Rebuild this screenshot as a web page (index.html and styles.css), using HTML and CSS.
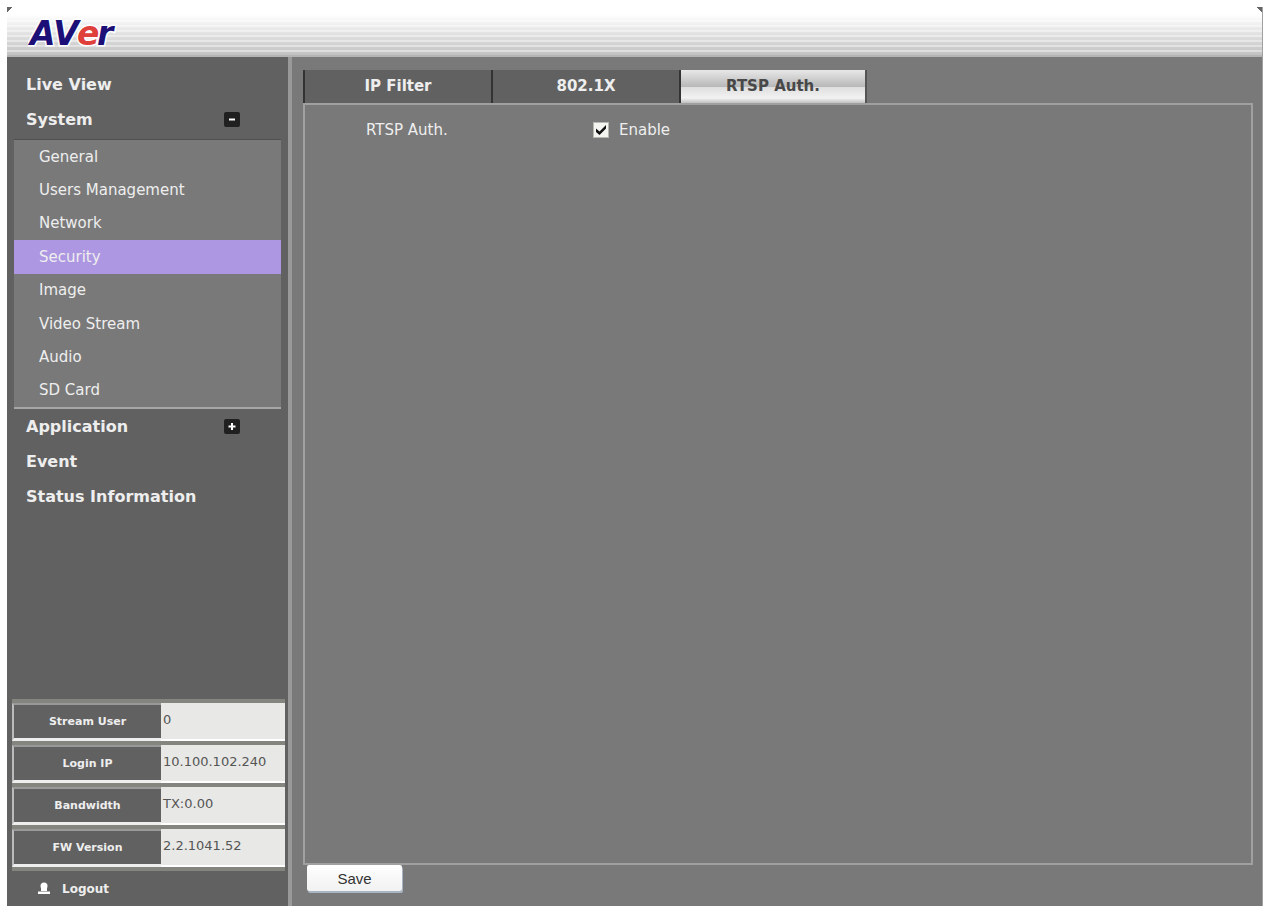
FILE: index.html
```
<!DOCTYPE html>
<html lang="en">
<head>
  <meta charset="UTF-8">
  <meta name="viewport" content="width=device-width, initial-scale=1.0">
  <title>AVer - Security</title>
  <link rel="stylesheet" href="styles.css">
</head>
<body>
  <div class="app">
    <header class="header">
      <svg class="logo" viewBox="0 0 100 44" role="img" aria-label="AVer">
        <text x="2" y="34">AV</text>
        <text x="69" y="34">r</text>
        <text class="logo-e" x="49" y="34">e</text>
      </svg>
    </header>
    <div class="content">
      <aside class="sidebar">
        <nav class="menu">
          <a class="menu-item" href="#">Live View</a>
          <a class="menu-item" href="#">System
            <svg class="toggle" viewBox="0 0 16 15"><rect width="16" height="15" rx="2"/><path d="M5 7.500h6"/></svg>
          </a>
          <div class="submenu">
            <a href="#">General</a>
            <a href="#">Users Management</a>
            <a href="#">Network</a>
            <a href="#" class="active">Security</a>
            <a href="#">Image</a>
            <a href="#">Video Stream</a>
            <a href="#">Audio</a>
            <a href="#">SD Card</a>
          </div>
          <a class="menu-item" href="#">Application
            <svg class="toggle" viewBox="0 0 16 15"><rect width="16" height="15" rx="2"/><path d="M4.500 7.500h7M8 4v7"/></svg>
          </a>
          <a class="menu-item" href="#">Event</a>
          <a class="menu-item" href="#">Status Information</a>
        </nav>
        <table class="status">
          <tr><th scope="row">Stream User</th><td>0</td></tr>
          <tr><th scope="row">Login IP</th><td>10.100.102.240</td></tr>
          <tr><th scope="row">Bandwidth</th><td>TX:0.00</td></tr>
          <tr><th scope="row">FW Version</th><td>2.2.1041.52</td></tr>
        </table>
        <a class="logout" href="#">
          <svg viewBox="0 0 12 13"><circle cx="6" cy="4" r="3.500"/><path d="M3 6h6v3H3zM0 9.500h12V12H0z"/></svg>
          Logout
        </a>
      </aside>
      <main class="main">
        <div class="tabs">
          <button type="button" class="tab">IP Filter</button>
          <button type="button" class="tab">802.1X</button>
          <button type="button" class="tab active">RTSP Auth.</button>
        </div>
        <section class="panel">
          <div class="field">
            <span class="field-name">RTSP Auth.</span>
            <input type="checkbox" id="rtsp-auth" checked>
            <label for="rtsp-auth">Enable</label>
          </div>
        </section>
        <button type="button" class="save">Save</button>
      </main>
    </div>
  </div>
</body>
</html>
```
FILE: styles.css
```
:root {
  --bg: #797979;
  --dark: #616161;
  --line: #a6a6a6;
  --text: #eeeeee;
  --active: #ad96e2;
}
* {
  box-sizing: border-box;
}
body {
  margin: 0;
  padding: 7px 8px 6px 7px;
  background: #fff;
  color: var(--text);
  font-family: "DejaVu Sans", Verdana, sans-serif;
  font-size: 15px;
}
a {
  color: inherit;
  text-decoration: none;
}
button {
  font-family: inherit;
  cursor: pointer;
}
.app {
  display: flex;
  flex-direction: column;
  min-height: calc(100vh - 13px);
  border-right: 1px solid #a0a0a0;
}
.header {
  height: 50px;
  padding: 4px 21px 0;
  border-bottom: 2px solid #b4b4b4;
  /* dark corner marks, stripes, then the fade */
  background:
    linear-gradient(135deg, #666 50%, transparent 50%) left top / 6px 6px no-repeat,
    linear-gradient(225deg, #666 50%, transparent 50%) right top / 6px 6px no-repeat,
    repeating-linear-gradient(rgba(255, 255, 255, 0) 0 3px, rgba(255, 255, 255, 0.4) 3px 5px),
    linear-gradient(#fff 15%, #c2c2c2);
}
.logo {
  display: block;
  width: 100px;
  height: 44px;
  fill: #1c0f78;
  stroke: #fff;
  stroke-width: 3;
  paint-order: stroke;
  font: italic bold 33px "DejaVu Sans", Verdana, sans-serif;
}
.logo-e {
  fill: #e0403c;
}
.content {
  display: flex;
  flex: 1;
}

/* Sidebar */
.sidebar {
  display: flex;
  flex-direction: column;
  width: 285px;
  padding-top: 10px;
  background: var(--dark);
  border-right: 4px solid #999;
}
.menu-item {
  display: flex;
  align-items: center;
  justify-content: space-between;
  height: 35px;
  padding: 0 48px 0 19px;
  font-size: 16px;
  font-weight: bold;
}
.toggle {
  width: 16px;
  height: 15px;
  fill: #202020;
  stroke: #fff;
  stroke-width: 2;
}
.toggle rect {
  stroke: none;
}
.submenu {
  display: grid;
  grid-auto-rows: 1fr;
  height: 270px;
  margin: 2px 7px 0;
  background: var(--bg);
  border-top: 1px solid #505050;
  border-bottom: 2px solid var(--line);
}
.submenu a {
  display: flex;
  align-items: center;
  padding-left: 25px;
}
.submenu .active {
  background: var(--active);
}
.status {
  width: 273px;
  margin: auto 0 0 5px;
  border-collapse: separate;
  border-spacing: 0 4px;
  background: #85857f;
}
.status th {
  width: 149px;
  height: 38px;
  padding: 0;
  background: var(--dark);
  border: solid #eee;
  border-width: 2px 0 3px 2px;
  border-top-color: #999;
  border-left-color: #bbb;
  font-size: 11px;
}
.status td {
  padding: 0 2px 4px;
  background: #e8e8e6;
  border-bottom: 2px solid #fff;
  color: #555;
  font-size: 13px;
}
.logout {
  display: flex;
  align-items: center;
  gap: 12px;
  height: 35px;
  padding-left: 31px;
  font-size: 12px;
  font-weight: bold;
}
.logout svg {
  width: 12px;
  height: 13px;
  fill: #fff;
}

/* Settings */
.main {
  display: flex;
  flex: 1;
  flex-direction: column;
  padding: 13px 9px 15px 11px;
  background: var(--bg);
}
.tabs {
  display: flex;
}
.tab {
  width: 188px;
  height: 33px;
  padding: 0 0 2px;
  background: var(--dark);
  border: 0;
  border-left: 2px solid #333;
  color: var(--text);
  font-size: 15px;
  font-weight: bold;
}
.tab.active {
  background: linear-gradient(#e8e8e8, #b9b9b9 50%, #dedede 52%, #f2f2f2 85%, #c0c0c0);
  border-right: 2px solid #555;
  color: #484848;
}
.panel {
  flex: 1;
  padding: 13px 61px;
  border: 2px solid #a0a0a0;
}
.field {
  display: flex;
  align-items: center;
  height: 24px;
}
.field-name {
  width: 227px;
}
.field input {
  display: grid;
  place-items: center;
  width: 16px;
  height: 16px;
  margin: 0 10px 0 0;
  appearance: none;
  background: #f4f4f0;
  border: 1px solid #b8b8b0;
}
.field input:checked::before {
  width: 10px;
  height: 10px;
  background: #111;
  clip-path: polygon(0 35%, 35% 65%, 100% 0, 100% 35%, 35% 100%, 0 70%);
  content: "";
}
.save {
  align-self: flex-start;
  width: 95px;
  height: 26px;
  margin: 0 0 0 4px;
  background: linear-gradient(#fff, #f1f1f1);
  border: 0;
  border-radius: 2px;
  box-shadow: 1px 2px 0 #a9b4c4;
  color: #333;
  font: 15px "Liberation Sans", Arial, sans-serif;
}
```
